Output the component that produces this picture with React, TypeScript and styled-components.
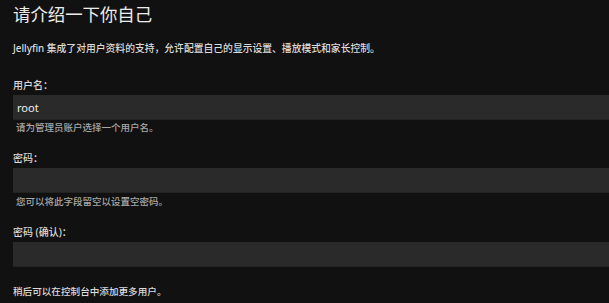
import styled, { createGlobalStyle } from "styled-components";

const GlobalStyle = createGlobalStyle`
  html, body {
    margin: 0;
    padding: 0;
    background: #111111;
    overflow: hidden;
  }
  body {
    font-family: "Noto Sans", "Noto Sans CJK SC", sans-serif;
    color: #e6e6e6;
  }
`;

const fields = [
  { label: "用户名：", value: "root", help: "请为管理员账户选择一个用户名。", gap: 1 },
  { label: "密码：", value: "", help: "您可以将此字段留空以设置空密码。", gap: 2 },
  { label: "密码 (确认)：", value: "", help: "", gap: 0 },
];

export default function App() {
  return (
    <Page>
      <GlobalStyle />
      <Title>请介绍一下你自己</Title>
      <Intro>Jellyfin 集成了对用户资料的支持，允许配置自己的显示设置、播放模式和家长控制。</Intro>
      {fields.map((f) => (
        <Field key={f.label}>
          <Label>{f.label}</Label>
          <Input>{f.value}</Input>
          {f.help && <Help $gap={f.gap}>{f.help}</Help>}
        </Field>
      ))}
      <Footer>稍后可以在控制台中添加更多用户。</Footer>
    </Page>
  );
}

const Page = styled.div`
  width: 609px;
  height: 303px;
  padding-left: 13px;
  box-sizing: border-box;
  display: flex;
  flex-direction: column;
`;

const Title = styled.h1`
  margin: 0;
  font-size: 17.4px;
  line-height: 28px;
  font-weight: 400;
  color: #ececec;
`;

const Intro = styled.p`
  margin: 14px 0 0;
  font-size: 9.8px;
  line-height: 14px;
  font-weight: 500;
  color: #dcdcdc;
  white-space: nowrap;
`;

const Field = styled.div`
  display: flex;
  flex-direction: column;
  margin-top: 22px;

  & + & {
    margin-top: 16px;
  }
`;

const Label = styled.div`
  font-size: 10px;
  line-height: 14px;
  font-weight: 500;
  color: #dadada;
`;

const Input = styled.div`
  margin-top: 3px;
  height: 25px;
  box-sizing: border-box;
  padding-left: 4px;
  background: #2a2a2a;
  border-bottom: 1px solid #232323;
  font-size: 11px;
  line-height: 25px;
  color: #eeeeee;
`;

const Help = styled.div<{ $gap: number }>`
  margin-top: ${(p) => p.$gap}px;
  padding-left: 3px;
  font-size: 9.5px;
  line-height: 14px;
  font-weight: 500;
  color: #a8a8a8;
`;

const Footer = styled.p`
  margin: 18px 0 0;
  font-size: 9.6px;
  line-height: 14px;
  font-weight: 500;
  color: #dcdcdc;
`;
